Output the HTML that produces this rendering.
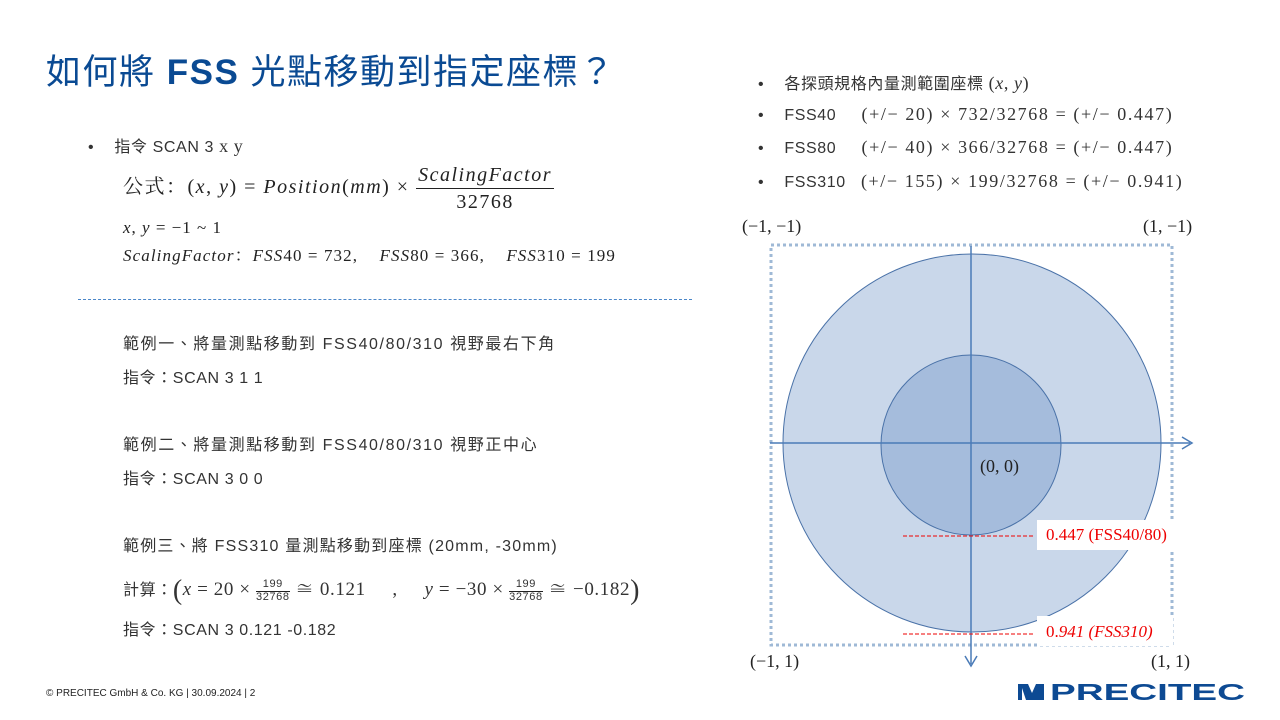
<!DOCTYPE html>
<html><head><meta charset="utf-8"><style>
body{margin:0;width:1280px;height:720px;background:#fff;position:relative;overflow:hidden;font-family:"Liberation Sans","Noto Sans CJK TC",sans-serif;color:#222}
.a{position:absolute;white-space:nowrap}
.m{font-family:"Liberation Serif","Noto Serif CJK SC",serif;font-size:18px}
.i{font-style:italic}
.t{font-size:16px;color:#333;letter-spacing:0.6px}
.frac{display:inline-block;vertical-align:middle;text-align:center;line-height:1}
.frac span{display:block}
</style></head><body>
<div class="a" style="left:46px;top:44px;font-size:35px;color:#0a4a93;letter-spacing:1.5px">如何將 <b>FSS</b> 光點移動到指定座標？</div>

<div class="a t" style="left:88px;top:133px">•&nbsp;&nbsp;&nbsp;&nbsp;指令 SCAN 3 <span class="m">x y</span></div>
<div class="a m" style="left:123px;top:165px;font-size:20px;letter-spacing:1.5px">公式：(<i>x</i>, <i>y</i>) = <i>Position</i>(<i>mm</i>) × <span class="frac"><span class="i" style="border-bottom:1px solid #222;padding:0 2px 3px">ScalingFactor</span><span style="padding-top:3px">32768</span></span></div>
<div class="a m" style="left:123px;top:218px;font-size:17px;letter-spacing:1px"><i>x</i>, <i>y</i> = −1 ~ 1</div>
<div class="a m" style="left:123px;top:241px;font-size:17px;letter-spacing:1.1px"><i>ScalingFactor</i>：<i>FSS</i>40 = 732,&nbsp;&nbsp;&nbsp; <i>FSS</i>80 = 366,&nbsp;&nbsp;&nbsp; <i>FSS</i>310 = 199</div>
<div class="a" style="left:78px;top:299px;width:614px;border-top:1px dashed #4a86c8"></div>

<div class="a t" style="left:123px;top:330px;letter-spacing:1.6px">範例一、將量測點移動到 FSS40/80/310 視野最右下角</div>
<div class="a t" style="left:123px;top:364px">指令：SCAN 3 1 1</div>
<div class="a t" style="left:123px;top:431px;letter-spacing:1.6px">範例二、將量測點移動到 FSS40/80/310 視野正中心</div>
<div class="a t" style="left:123px;top:465px">指令：SCAN 3 0 0</div>
<div class="a t" style="left:123px;top:532px;letter-spacing:1.2px">範例三、將 FSS310 量測點移動到座標 (20mm, -30mm)</div>
<div class="a t" style="left:123px;top:574px">計算：<span class="m" style="font-size:28px;vertical-align:-4px">(</span><span class="m" style="font-size:19px;letter-spacing:0.6px"><i>x</i> = 20 × <span class="frac" style="font-size:11px;font-family:'Liberation Sans'"><span style="border-bottom:1px solid #222;padding-bottom:1px">199</span><span>32768</span></span> ≅ 0.121&nbsp;&nbsp;&nbsp;&nbsp; ,&nbsp;&nbsp;&nbsp;&nbsp; <i>y</i> = −30 × <span class="frac" style="font-size:11px;font-family:'Liberation Sans'"><span style="border-bottom:1px solid #222;padding-bottom:1px">199</span><span>32768</span></span> ≅ −0.182</span><span class="m" style="font-size:28px;vertical-align:-4px">)</span></div>
<div class="a t" style="left:123px;top:616px">指令：SCAN 3 0.121 -0.182</div>

<div class="a t" style="left:758px;top:70px">•&nbsp;&nbsp;&nbsp;&nbsp;各探頭規格內量測範圍座標 <span class="m" style="font-size:18px">(<i>x</i>, <i>y</i>)</span></div>
<div class="a t" style="left:758px;top:104px">•&nbsp;&nbsp;&nbsp;&nbsp;FSS40&nbsp;&nbsp;&nbsp;&nbsp; <span class="m" style="font-size:18px;letter-spacing:1.6px">(+/− 20) × 732/32768 = (+/− 0.447)</span></div>
<div class="a t" style="left:758px;top:137px">•&nbsp;&nbsp;&nbsp;&nbsp;FSS80&nbsp;&nbsp;&nbsp;&nbsp; <span class="m" style="font-size:18px;letter-spacing:1.6px">(+/− 40) × 366/32768 = (+/− 0.447)</span></div>
<div class="a t" style="left:758px;top:171px">•&nbsp;&nbsp;&nbsp;&nbsp;FSS310&nbsp;&nbsp; <span class="m" style="font-size:18px;letter-spacing:1.6px">(+/− 155) × 199/32768 = (+/− 0.941)</span></div>

<svg class="a" style="left:0;top:0" width="1280" height="720">
<rect x="771" y="245" width="401" height="400" fill="none" stroke="#9fb9d6" stroke-width="3" stroke-dasharray="3,3"/>
<circle cx="972" cy="443" r="189" fill="#c9d7ea" stroke="#4a72a8" stroke-width="1"/>
<circle cx="971" cy="445" r="90" fill="#a5bcdc" stroke="#4a72a8" stroke-width="1"/>
<line x1="971" y1="246" x2="971" y2="664" stroke="#4a7bb7" stroke-width="1.5"/>
<path d="M965 656 L971 666 L977 656" fill="none" stroke="#4a7bb7" stroke-width="1.5"/>
<line x1="770" y1="443" x2="1190" y2="443" stroke="#4a7bb7" stroke-width="1.5"/>
<path d="M1182 437 L1192 443 L1182 449" fill="none" stroke="#4a7bb7" stroke-width="1.5"/>
<rect x="1037" y="520" width="143" height="30" fill="#fff"/>
<rect x="1037" y="616" width="136" height="30" fill="#fff"/>
<line x1="903" y1="536" x2="1035" y2="536" stroke="#e00" stroke-dasharray="4,2"/>
<line x1="903" y1="634" x2="1035" y2="634" stroke="#e00" stroke-dasharray="4,2"/>
<path d="M1018 684h10l4 9 4-9h8v16h-26z" fill="#0d4a93"/>
<path d="M1022 688v12h4z" fill="#fff"/>
<text x="1050" y="700" font-family="Liberation Sans" font-weight="bold" font-size="23" fill="#0d4a93" textLength="195" lengthAdjust="spacingAndGlyphs">PRECITEC</text>
</svg>
<div class="a m" style="left:1046px;top:525px;font-size:17px;color:#e00">0.447 (FSS40/80)</div>
<div class="a m" style="left:1046px;top:622px;font-size:17px;color:#e00">0.<i>941 (FSS310)</i></div>
<div class="a m" style="left:742px;top:216px;font-size:18px">(−1, −1)</div>
<div class="a m" style="left:1143px;top:216px;font-size:18px">(1, −1)</div>
<div class="a m" style="left:750px;top:651px;font-size:18px">(−1, 1)</div>
<div class="a m" style="left:1151px;top:651px;font-size:18px">(1, 1)</div>
<div class="a m" style="left:980px;top:456px;font-size:18px">(0, 0)</div>
<div class="a" style="left:46px;top:688px;font-size:10px;color:#222">© PRECITEC GmbH &amp; Co. KG | 30.09.2024 | 2</div>
</body></html>
